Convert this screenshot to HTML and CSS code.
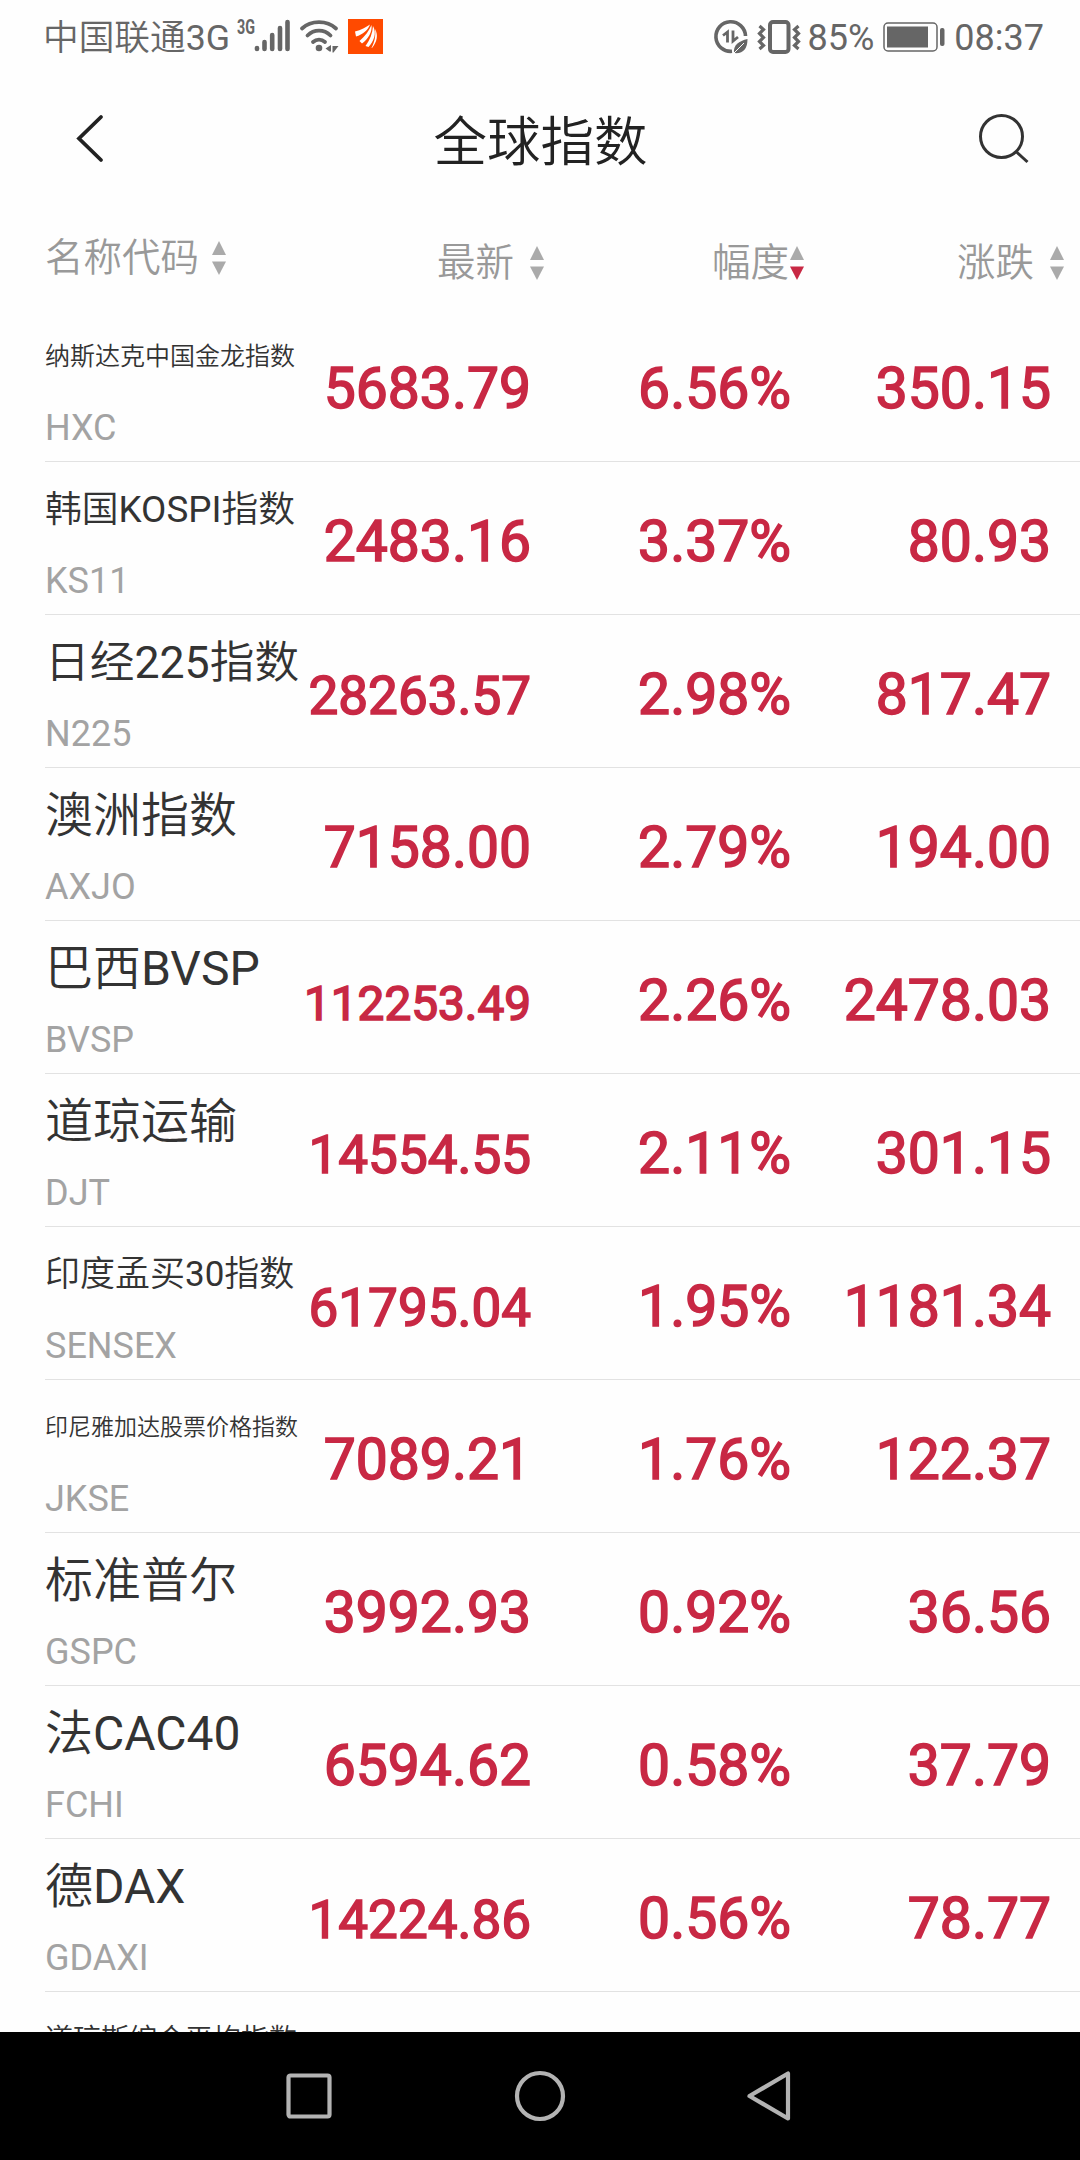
FILE: index.html
```html
<!DOCTYPE html>
<html lang="zh-CN">
<head>
    <meta charset="UTF-8">
    <meta name="viewport" content="width=device-width, initial-scale=1.0">
    <title>全球指数</title>
    <link rel="stylesheet" href="styles.css">
</head>
<body>
    <div class="screen">
        <div class="status-bar">
            <span class="carrier">中国联通3G</span>
            <svg class="signal" width="54" height="36" viewBox="0 0 54 36">
                <text x="0" y="15" class="net-label" textLength="18" lengthAdjust="spacingAndGlyphs">3G</text>
                <g stroke="#666" stroke-width="4.6" stroke-linecap="round">
                    <path d="M20 29v1M27.500 23v7M35.200 16v14M43 9v21M50.500 3v27"/>
                </g>
            </svg>
            <svg class="wifi" width="40" height="36" viewBox="0 0 40 36">
                <g fill="none" stroke="#666" stroke-width="3.800" stroke-linecap="round">
                    <path d="M3 9.500C12 1 28 1 37 9.500"/>
                    <path d="M8.500 16.500C15 10 25 10 31.500 16.500"/>
                    <path d="M14 23C17.500 20 22.500 20 26 23"/>
                </g>
                <circle cx="20" cy="29" r="3.300" fill="#666"/>
                <path d="M32 26v6.500h-1.500l-4-3zM33.500 27h6l-5 6.500h-1z" fill="#666"/>
            </svg>
            <svg class="app-logo" width="35" height="35" viewBox="0 0 35 35">
                <rect width="35" height="35" fill="#ff4a00"/>
                <path d="M7 12.500C13 11.500 18 8 22 5.500C20 11 15 15.500 8 17.500zM11.500 22C17 17 21 12 23.500 6C24.500 13 20 20 14 24.500zM17.500 27C22 21 24.500 14 25 7C29 14 26 22 20.500 28zM23.500 29C26.500 23 28 17 27 10C30.500 16 29 23 24 29z" fill="#fff"/>
            </svg>
            <div class="status-right">
                <svg class="saver" width="34" height="34" viewBox="0 0 34 34">
                    <path d="M18 31.300A14.800 14.800 0 1 1 31.500 16" fill="none" stroke="#666" stroke-width="3.600"/>
                    <path d="M9 15.500l4.500-3.500v10.500M19 10.500v10.500l5-4" fill="none" stroke="#666" stroke-width="2.800"/>
                    <path d="M33.500 19C33.500 29 29 34 20 33C19 25 25 21 33.500 19z" fill="#666"/>
                    <path d="M19 34L30 23" stroke="#fefefe" stroke-width="1"/>
                </svg>
                <svg class="vibrate" width="42" height="34" viewBox="0 0 42 34">
                    <rect x="12" y="2" width="18.500" height="30" rx="3" fill="none" stroke="#666" stroke-width="4"/>
                    <path d="M1.500 6l4 3.500-4 4 4 4-4 4 4 4-4 3.500M40.500 6l-4 3.500 4 4-4 4 4 4-4 4 4 3.500" fill="none" stroke="#666" stroke-width="3.200"/>
                </svg>
                <span class="battery-text">85%</span>
                <svg class="battery" width="62" height="30" viewBox="0 0 62 30">
                    <rect x="1" y="1" width="53" height="28" rx="4" fill="none" stroke="#666" stroke-width="1.500"/>
                    <rect x="4" y="4.500" width="41" height="21" fill="#666"/>
                    <rect x="57" y="6" width="4.500" height="18" rx="2" fill="#666"/>
                </svg>
                <span class="clock">08:37</span>
            </div>
        </div>

        <div class="nav-header">
            <svg class="back" width="30" height="50" viewBox="0 0 30 50">
                <path d="M26 3L4 24.500L26 46" fill="none" stroke="#222" stroke-width="3.800" stroke-linecap="round"/>
            </svg>
            <h1 class="title">全球指数</h1>
            <svg class="search" width="52" height="52" viewBox="0 0 52 52">
                <circle cx="23.500" cy="23.500" r="21" fill="none" stroke="#333" stroke-width="3"/>
                <path d="M38 38.500L49.500 49" stroke="#333" stroke-width="3"/>
            </svg>
        </div>

        <div class="row table-head">
            <div class="col-name">名称代码<svg class="sort" width="16" height="34" viewBox="0 0 16 34"><path d="M8 0l7 14h-14z"/><path d="M8 34l7-13.500h-14z"/></svg></div>
            <div class="col-price">最新<svg class="sort" width="16" height="34" viewBox="0 0 16 34"><path d="M8 0l7 14h-14z"/><path d="M8 34l7-13.500h-14z"/></svg></div>
            <div class="col-rate">幅度<svg class="sort" width="16" height="34" viewBox="0 0 16 34"><path d="M8 0l7 14h-14z"/><path class="active" d="M8 34l7-13.500h-14z"/></svg></div>
            <div class="col-change">涨跌<svg class="sort" width="16" height="34" viewBox="0 0 16 34"><path d="M8 0l7 14h-14z"/><path d="M8 34l7-13.500h-14z"/></svg></div>
        </div>

        <div class="list">
            <div class="row item">
                <div class="col-name"><div class="name size-25">纳斯达克中国金龙指数</div><div class="code">HXC</div></div>
                <div class="col-price">5683.79</div>
                <div class="col-rate">6.56%</div>
                <div class="col-change">350.15</div>
            </div>
            <div class="row item">
                <div class="col-name"><div class="name size-37">韩国KOSPI指数</div><div class="code">KS11</div></div>
                <div class="col-price">2483.16</div>
                <div class="col-rate">3.37%</div>
                <div class="col-change">80.93</div>
            </div>
            <div class="row item">
                <div class="col-name"><div class="name size-45">日经225指数</div><div class="code">N225</div></div>
                <div class="col-price long">28263.57</div>
                <div class="col-rate">2.98%</div>
                <div class="col-change">817.47</div>
            </div>
            <div class="row item">
                <div class="col-name"><div class="name">澳洲指数</div><div class="code">AXJO</div></div>
                <div class="col-price">7158.00</div>
                <div class="col-rate">2.79%</div>
                <div class="col-change">194.00</div>
            </div>
            <div class="row item">
                <div class="col-name"><div class="name">巴西BVSP</div><div class="code">BVSP</div></div>
                <div class="col-price longer">112253.49</div>
                <div class="col-rate">2.26%</div>
                <div class="col-change">2478.03</div>
            </div>
            <div class="row item">
                <div class="col-name"><div class="name">道琼运输</div><div class="code">DJT</div></div>
                <div class="col-price long">14554.55</div>
                <div class="col-rate">2.11%</div>
                <div class="col-change">301.15</div>
            </div>
            <div class="row item">
                <div class="col-name"><div class="name size-35">印度孟买30指数</div><div class="code">SENSEX</div></div>
                <div class="col-price long">61795.04</div>
                <div class="col-rate">1.95%</div>
                <div class="col-change">1181.34</div>
            </div>
            <div class="row item">
                <div class="col-name"><div class="name size-23">印尼雅加达股票价格指数</div><div class="code">JKSE</div></div>
                <div class="col-price">7089.21</div>
                <div class="col-rate">1.76%</div>
                <div class="col-change">122.37</div>
            </div>
            <div class="row item">
                <div class="col-name"><div class="name">标准普尔</div><div class="code">GSPC</div></div>
                <div class="col-price">3992.93</div>
                <div class="col-rate">0.92%</div>
                <div class="col-change">36.56</div>
            </div>
            <div class="row item">
                <div class="col-name"><div class="name">法CAC40</div><div class="code">FCHI</div></div>
                <div class="col-price">6594.62</div>
                <div class="col-rate">0.58%</div>
                <div class="col-change">37.79</div>
            </div>
            <div class="row item">
                <div class="col-name"><div class="name">德DAX</div><div class="code">GDAXI</div></div>
                <div class="col-price long">14224.86</div>
                <div class="col-rate">0.56%</div>
                <div class="col-change">78.77</div>
            </div>
            <div class="row item">
                <div class="col-name"><div class="name size-28">道琼斯综合平均指数</div></div>
            </div>
        </div>

        <div class="android-nav">
            <svg width="50" height="54" viewBox="0 0 50 54"><rect x="3.500" y="6.500" width="41" height="41" rx="2" fill="none" stroke="#b3b3b3" stroke-width="4.200"/></svg>
            <svg width="54" height="54" viewBox="0 0 54 54"><circle cx="27" cy="27" r="23" fill="none" stroke="#b3b3b3" stroke-width="4.200"/></svg>
            <svg width="50" height="54" viewBox="0 0 50 54"><path d="M43 4.500v45L4.500 27z" fill="none" stroke="#b3b3b3" stroke-width="4.200" stroke-linejoin="round"/></svg>
        </div>
    </div>
</body>
</html>
```
FILE: styles.css
```css
html, body {
    margin: 0;
    padding: 0;
}
body {
    background: #fefefe;
    font-family: Roboto, "Noto Sans CJK SC DemiLight", "Noto Sans CJK SC Light", "Noto Sans CJK SC", sans-serif;
    font-weight: 400;
    color: #333;
}
svg {
    display: block;
    flex: none;
    overflow: visible;
}
.screen {
    width: 1080px;
    height: 2160px;
    display: flex;
    flex-direction: column;
    overflow: hidden;
}

/* status bar */
.status-bar {
    flex: none;
    height: 75px;
    display: flex;
    align-items: center;
    box-sizing: border-box;
    padding: 0 36px 2px 43px;
    color: #666;
    font-size: 36px;
    line-height: 75px;
}
.status-bar span {
    padding-top: 3px;
}
.carrier {
    width: 194px;
    font-size: 35.7px;
    white-space: nowrap;
}
.net-label {
    font-size: 21px;
    font-weight: 700;
    fill: #666;
}
.wifi {
    margin-left: 8px;
}
.app-logo {
    margin-left: 9px;
}
.status-right {
    margin-left: auto;
    display: flex;
    align-items: center;
}
.vibrate {
    margin: 0 8px 0 10px;
}
.battery {
    margin: 0 9px 0 9px;
}

/* title */
.nav-header {
    flex: none;
    height: 128px;
    display: flex;
    align-items: center;
    justify-content: space-between;
    box-sizing: border-box;
    padding: 0 50px 0 75px;
}
.title {
    margin: 0;
    padding: 7px 2px 0 0;
    font-size: 53.5px;
    font-weight: 400;
    line-height: 121px;
    color: #222;
}

/* table */
.row {
    display: grid;
    grid-template-columns: 254px 232px 260px 260px;
    margin-left: 45px;
    box-sizing: border-box;
}
.table-head {
    grid-template-columns: 254px 246px 260px 260px;
    flex: none;
    height: 106px;
    padding-top: 30px;
    font-size: 38.5px;
    line-height: 60px;
    color: #999;
}
.table-head > div {
    display: flex;
    align-items: center;
    justify-content: flex-end;
    gap: 15px;
    height: 60px;
}
.table-head .col-name {
    justify-content: flex-start;
    gap: 12px;
    height: 50px;
}
.table-head .col-rate {
    gap: 0;
}
.sort {
    fill: #aaa;
}
.sort .active {
    fill: #c82844;
}
.list {
    flex: 1;
    min-height: 0;
    overflow: hidden;
}
.item {
    height: 153px;
    border-bottom: 1px solid #e2e2e2;
    align-items: start;
    color: #c82844;
    font-size: 57px;
    line-height: 68px;
    white-space: nowrap;
    padding-top: 18px;
}
.item .col-price,
.item .col-rate,
.item .col-change {
    align-self: baseline;
    padding-top: 28px;
    text-align: right;
    -webkit-text-stroke: 1.6px #c82844;
}
.name {
    height: 60px;
    line-height: 60px;
    font-size: 48px;
    color: #333;
}
.code {
    margin-top: 17px;
    line-height: 48px;
    font-size: 36px;
    color: #a3a3a3;
}

/* long names shrink to stay on one line */
.size-45 { font-size: 44.7px; }
.size-37 { font-size: 36.8px; }
.size-35 { font-size: 35px; }
.size-28 { font-size: 28px; }
.size-25 { font-size: 25px; }
.size-23 { font-size: 23px; }
.item .long {
    font-size: 53px;
}
.item .longer {
    font-size: 47.7px;
}

/* system buttons */
.android-nav {
    flex: none;
    height: 128px;
    background: #000;
    display: flex;
    align-items: center;
    justify-content: center;
    gap: 178px;
}
```
